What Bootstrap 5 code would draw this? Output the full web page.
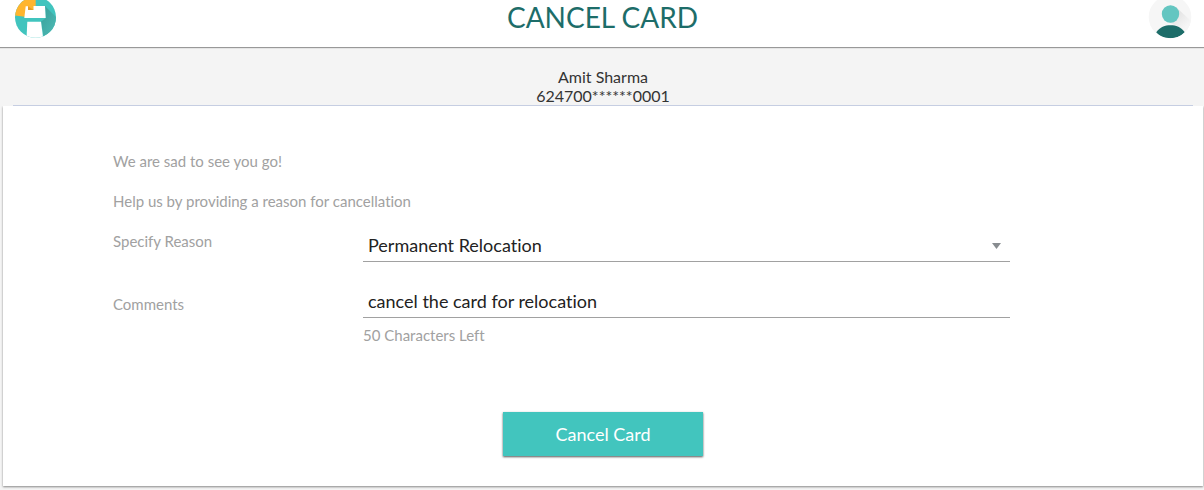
<!DOCTYPE html>
<html lang="en">
<head>
<meta charset="utf-8">
<meta name="viewport" content="width=device-width, initial-scale=1">
<title>Cancel Card</title>
<link href="https://cdn.jsdelivr.net/npm/bootstrap@5.3.0/dist/css/bootstrap.min.css" rel="stylesheet">
<style>
  body { font-family: Lato, "Liberation Sans", sans-serif; font-variant-ligatures: none; background: #f4f4f4; color: #333; }
  .top-bar { height: 47px; background: #fff; box-shadow: 0 1px 1px #999; padding: 0 12px 0 14px; }
  .top-bar svg { display: block; margin-top: -5px; }
  .top-bar h1 { font-size: 28px; line-height: 34px; color: #1d6d69; }
  .holder { margin: 0 11px 0 13px; padding-top: 20px; font-size: 16px; line-height: 19px; border-bottom: 1px solid #c6cee2; }
  .panel { margin: 0 1px 3px 3px; padding: 45px 0 30px; background: #fff; box-shadow: 0 1px 2px #888; clip-path: inset(0 -3px -4px -3px); }
  .panel .row { --bs-gutter-x: 20px; }
  .panel p, .panel label, .hint { font-size: 15px; line-height: 20px; color: #a1a1a1; }
  .panel p { margin-bottom: 20px; }
  .panel .below { padding-top: 7px; }
  .field-row { margin-bottom: 25px; }
  .line-field { display: block; width: 100%; height: 31px; padding: 0 5px 3px; border: 0; border-bottom: 1px solid #a1a1a1; border-radius: 0; background-color: transparent; font-size: 18px; line-height: 24px; color: #222; font-variant-ligatures: none; }
  select.line-field { appearance: none; background: url("data:image/svg+xml,%3Csvg xmlns='http://www.w3.org/2000/svg' width='9' height='6'%3E%3Cpath d='M0 0h9L4.500 6z' fill='%23888c90'/%3E%3C/svg%3E") no-repeat right 9px center; }
  .actions { margin-top: 67px; }
  .btn-cancel { display: block; width: 200px; height: 44px; padding: 0; border: 0; border-radius: 0; background: #42c5be; color: #fff; font-size: 18px; box-shadow: 0 1px 2px #555; }
  .btn-cancel:hover { background: #36b3ac; color: #fff; }
</style>
</head>
<body>
<header class="top-bar d-flex justify-content-between align-items-start">
  <a href="#" aria-label="Home">
    <svg width="43" height="44" viewBox="0 0 43 44">
      <defs>
        <clipPath id="disc"><circle cx="21.500" cy="22.300" r="20.500"/></clipPath>
        <linearGradient id="shade" x1="0" y1="0" x2="1" y2="1"><stop offset="0" stop-color="#379f9a"/><stop offset="1" stop-color="#52bfb9"/></linearGradient>
      </defs>
      <g clip-path="url(#disc)">
        <path fill="#41c4be" d="M0 0h43v44H0z"/>
        <path fill="#ffb52e" d="M0 0h21.700v16l-9 6L0 20.500z"/>
        <path fill="url(#shade)" d="M31 11l14 14v19H30l-3-17.300 4.700-3.700z"/>
        <path fill="#fff" d="M11.700 11.300H14V15h5.500v-4H31l.7 12H10.300z"/>
        <path fill="#fff" d="M13.300 26.700H27L29.300 44H12.500z"/>
        <path fill="#e69b25" d="M14 11.300l5.500 3.700H14z"/>
      </g>
    </svg>
  </a>
  <h1 class="m-0 fw-normal">CANCEL CARD</h1>
  <a href="#" aria-label="Profile">
    <svg width="44" height="44" viewBox="0 0 44 44">
      <defs>
        <clipPath id="face"><circle cx="22" cy="22" r="21.300"/></clipPath>
        <linearGradient id="cast" x1="0" y1="0" x2="1" y2="1"><stop offset=".2" stop-color="#dedede"/><stop offset=".8" stop-color="#f6f6f6"/></linearGradient>
      </defs>
      <g clip-path="url(#face)">
        <path fill="#f6f6f6" d="M0 0h44v44H0z"/>
        <path fill="url(#cast)" d="M28 12l16 15-4 9-22-10z"/>
        <circle cx="22.500" cy="19" r="8.700" fill="#64c6c1"/>
        <path fill="#1d6d69" d="M8.200 37.300C12 32 17 30.200 22.500 30.200S33 32 36.800 37.300C33 41.500 28 43.200 22.500 43.200S12 41.500 8.200 37.300z"/>
      </g>
    </svg>
  </a>
</header>
<section class="holder text-center">
  <div>Amit Sharma</div>
  <div>624700******0001</div>
</section>
<main class="panel">
  <form>
    <div class="row mx-0">
      <div class="col-10 offset-1">
        <p>We are sad to see you go!</p>
        <p>Help us by providing a reason for cancellation</p>
        <div class="row field-row">
          <div class="col-3"><label class="d-block" for="reason">Specify Reason</label></div>
          <div class="col-8"><select id="reason" class="line-field"><option>Permanent Relocation</option></select></div>
        </div>
        <div class="row">
          <div class="col-3 below"><label class="d-block" for="comments">Comments</label></div>
          <div class="col-8">
            <input id="comments" class="line-field" type="text" value="cancel the card for relocation">
            <div class="hint below">50 Characters Left</div>
          </div>
        </div>
      </div>
    </div>
    <div class="actions d-flex justify-content-center"><button type="button" class="btn btn-cancel">Cancel Card</button></div>
  </form>
</main>
<script src="https://cdn.jsdelivr.net/npm/bootstrap@5.3.0/dist/js/bootstrap.bundle.min.js"></script>
</body>
</html>
